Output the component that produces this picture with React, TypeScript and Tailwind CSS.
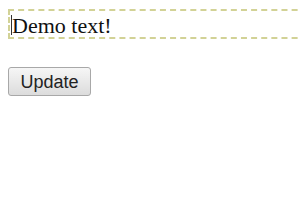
export default function App() {
  return (
    <div className="w-[300px] h-[210px] overflow-hidden bg-white pt-[9px] pl-[8px]">
      <div className="w-[320px] h-[30px] border-2 border-dashed border-[#d2d296] flex items-center">
        <span className="w-px h-[20px] bg-[#333] ml-px mt-[2px]" />
        <span className="font-['Liberation_Serif'] text-[22px] leading-none text-[#111] pt-[4px]">Demo text!</span>
      </div>
      <button className="mt-[28px] w-[83px] h-[29px] rounded-[3px] border border-[#a8a8a8] bg-gradient-to-b from-[#f6f6f6] to-[#dcdcdc] font-['Liberation_Sans'] text-[18px] leading-none text-[#222]">
        Update
      </button>
    </div>
  );
}
